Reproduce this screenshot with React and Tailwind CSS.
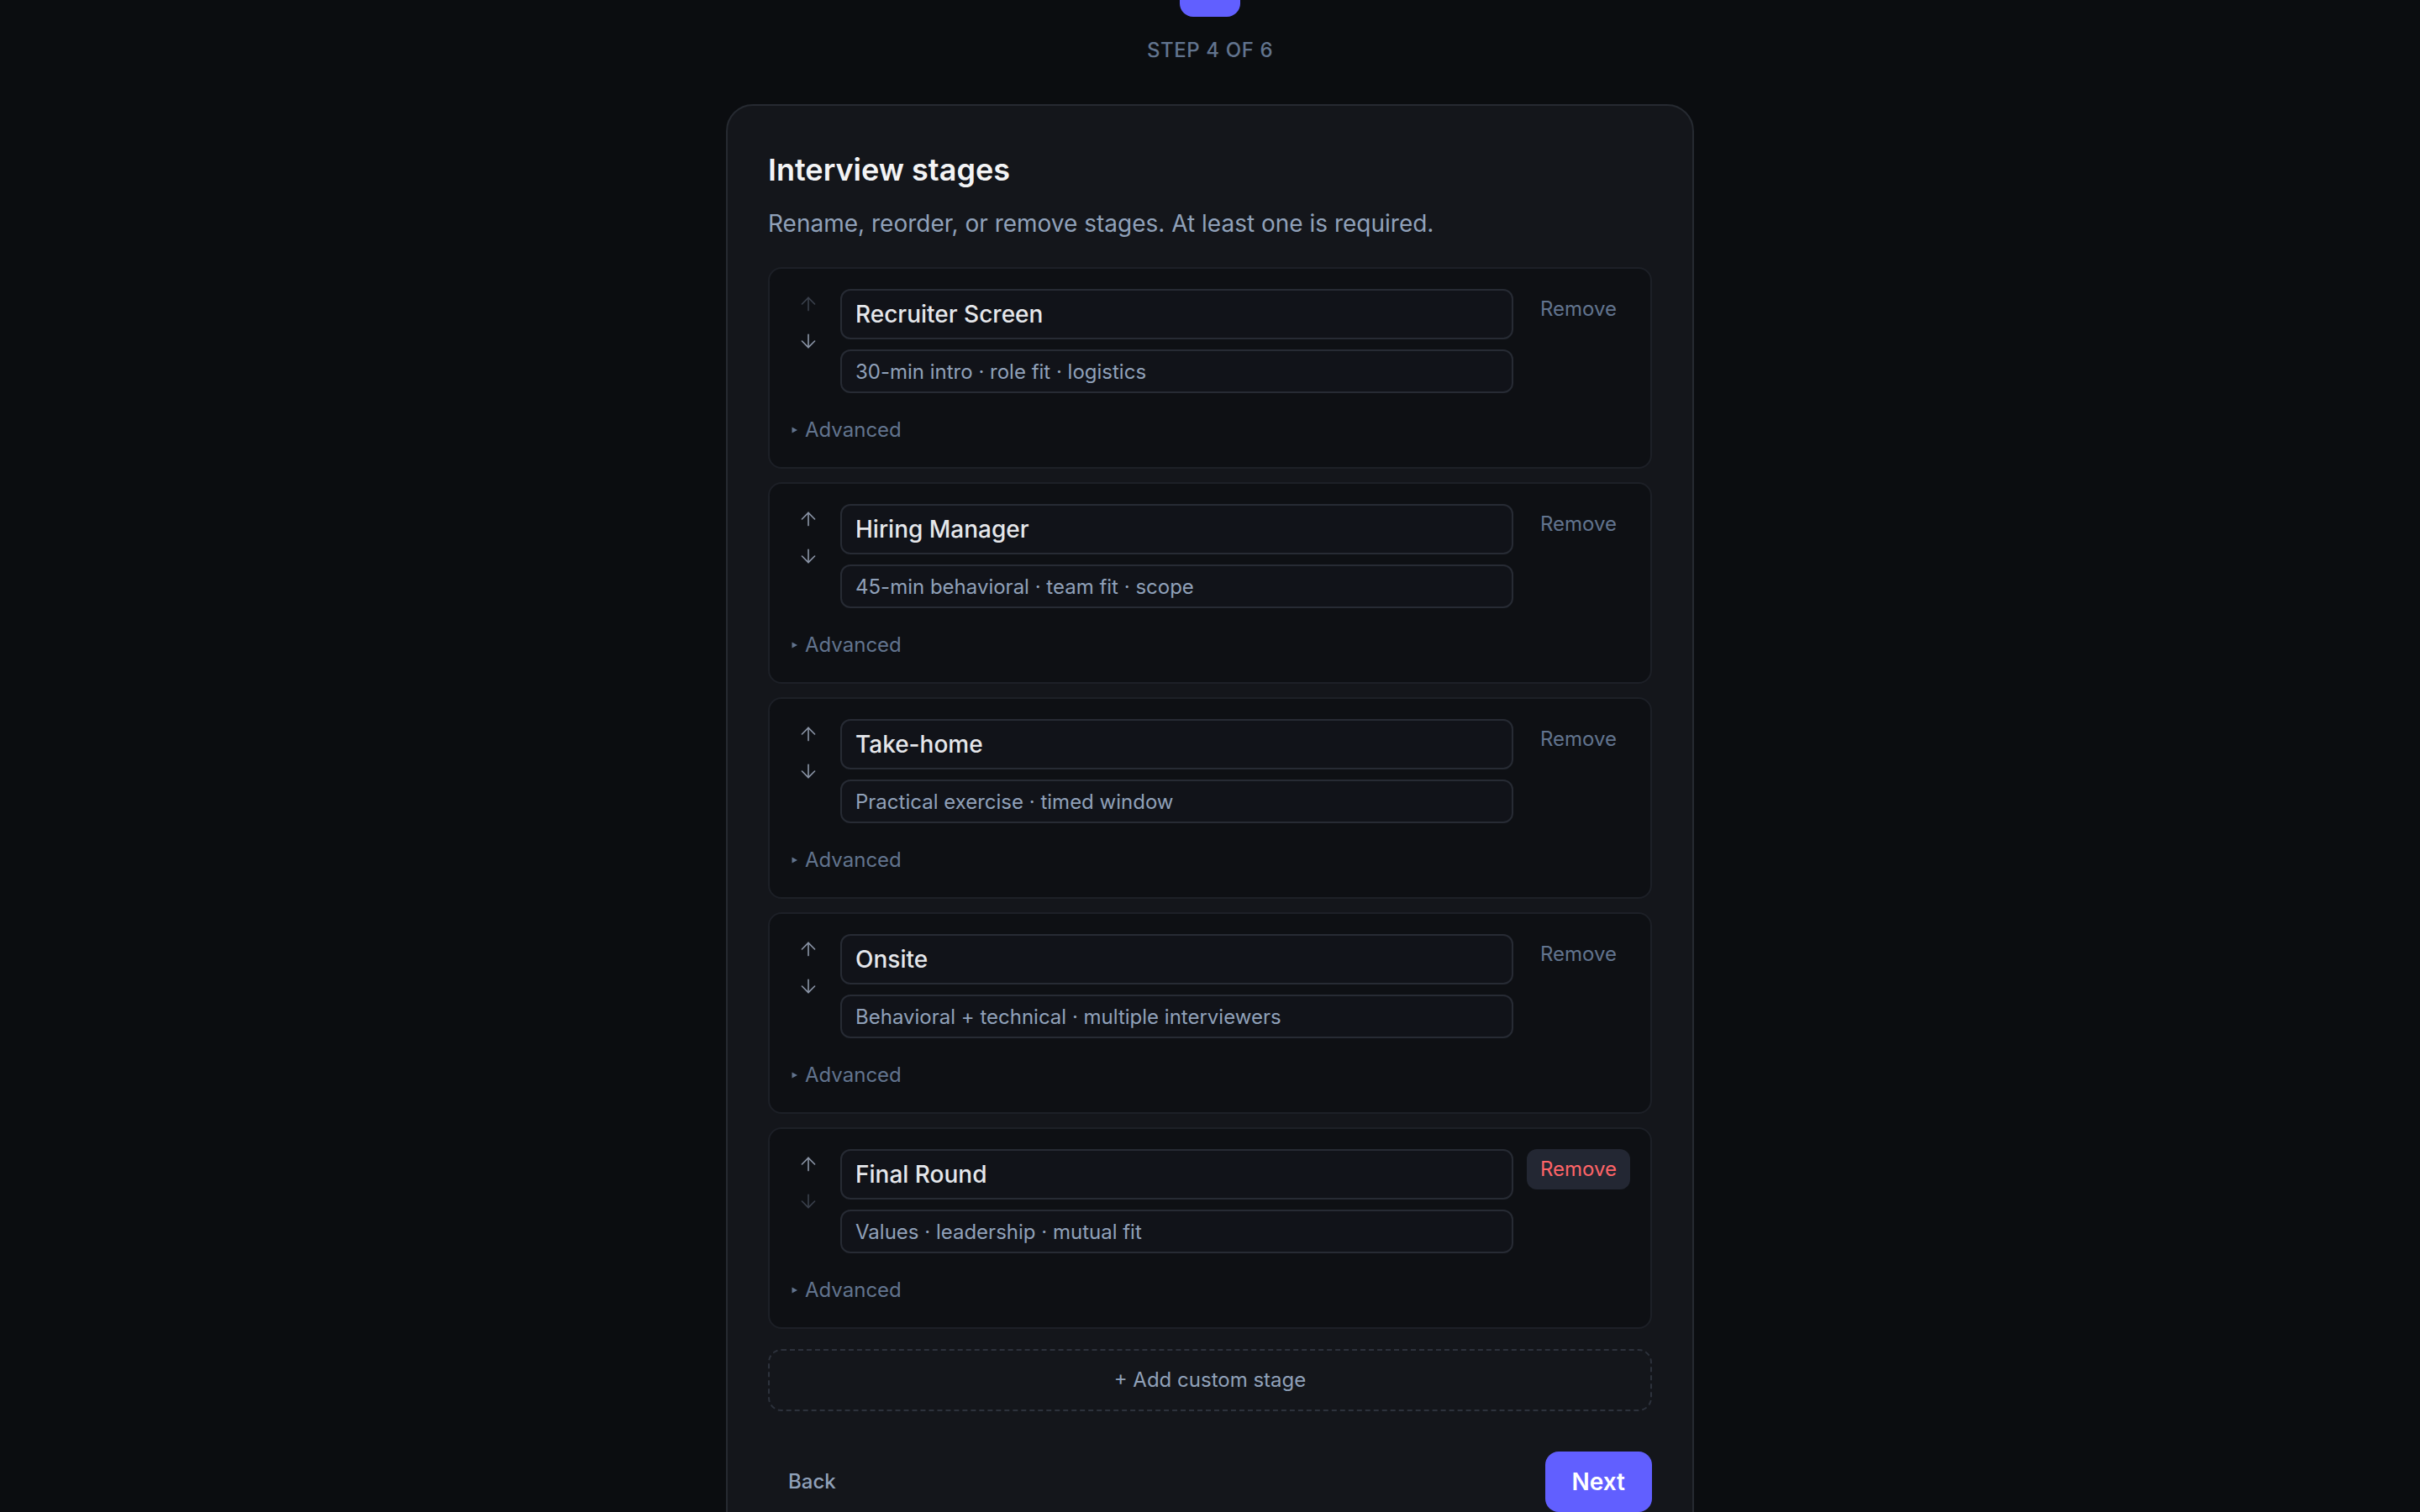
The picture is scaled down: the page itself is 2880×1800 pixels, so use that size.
import React from 'react';
import { ArrowUp, ArrowDown } from 'lucide-react';

const stages = [
  { name: 'Recruiter Screen', note: '30-min intro · role fit · logistics' },
  { name: 'Hiring Manager', note: '45-min behavioral · team fit · scope' },
  { name: 'Take-home', note: 'Practical exercise · timed window' },
  { name: 'Onsite', note: 'Behavioral + technical · multiple interviewers' },
  { name: 'Final Round', note: 'Values · leadership · mutual fit' },
];

const StageRow = ({ stage, first, last, hovered }) => (
  <div className="rounded-2xl border-2 border-[#1d2027] bg-[#0e1014] p-6">
    <div className="flex items-start gap-4">
      <div className="flex w-[44px] flex-col items-center gap-2">
        <button
          className={`flex h-9 w-full items-center justify-center ${first ? 'text-[#3a404c]' : 'text-[#8a94a6]'}`}
        >
          <ArrowUp size={26} strokeWidth={1.5} />
        </button>
        <button
          className={`flex h-9 w-full items-center justify-center ${last ? 'text-[#3a404c]' : 'text-[#8a94a6]'}`}
        >
          <ArrowDown size={26} strokeWidth={1.5} />
        </button>
      </div>

      <div className="flex min-w-0 flex-1 flex-col gap-3">
        <input
          defaultValue={stage.name}
          className="h-[60px] w-full rounded-xl border-2 border-[#272b34] bg-[#111319] px-4 text-[28px] font-medium text-gray-200 outline-none"
        />
        <input
          defaultValue={stage.note}
          className="h-[52px] w-full rounded-xl border-2 border-[#272b34] bg-[#111319] px-4 text-[24px] text-slate-400 outline-none"
        />
      </div>

      <button
        className={`rounded-xl px-4 py-2 text-[24px] leading-8 ${hovered ? 'bg-[#232733] text-red-400' : 'text-slate-500'}`}
      >
        Remove
      </button>
    </div>

    <details className="mt-6">
      <summary className="flex cursor-pointer items-center text-[24px] leading-10 text-slate-500 [&::-webkit-details-marker]:hidden">
        <svg width="10" height="10" viewBox="0 0 10 10" className="mr-[7px] ml-[1px]">
          <polygon points="1.5,1.5 8,5 1.5,8.5" fill="currentColor" />
        </svg>
        Advanced
      </summary>
    </details>
  </div>
);

export default function App() {
  return (
    <div className="min-h-screen bg-[#0b0d10] font-[Inter,'Noto_Sans',sans-serif] text-slate-200 antialiased">
      <div className="mx-auto flex w-[1152px] flex-col items-center pb-20">
        <div className="-mt-[52px] h-[72px] w-[72px] rounded-2xl bg-indigo-500" />
        <p className="mt-6 text-[24px] leading-8 font-medium uppercase tracking-wide text-slate-500">
          Step 4 of 6
        </p>

        <div className="mt-12 w-full rounded-[32px] border-2 border-[#262a31] bg-[#14161b] p-12">
          <h1 className="text-[36px] leading-[56px] font-semibold text-gray-100">Interview stages</h1>
          <p className="mt-4 text-[28px] leading-10 text-slate-400">
            Rename, reorder, or remove stages. At least one is required.
          </p>

          <div className="mt-8 flex flex-col gap-4">
            {stages.map((s, i) => (
              <StageRow
                key={s.name}
                stage={s}
                first={i === 0}
                last={i === stages.length - 1}
                hovered={i === stages.length - 1}
              />
            ))}
          </div>

          <button className="mt-6 h-[74px] w-full rounded-2xl border-2 border-dashed border-[#2d323c] text-[24px] text-slate-400">
            + Add custom stage
          </button>

          <div className="mt-12 flex items-center justify-between">
            <button className="px-6 py-4 text-[24px] leading-10 font-medium text-slate-400">Back</button>
            <button className="rounded-2xl bg-indigo-500 px-8 py-4 text-[28px] leading-10 font-semibold text-white">
              Next
            </button>
          </div>
        </div>
      </div>
    </div>
  );
}
